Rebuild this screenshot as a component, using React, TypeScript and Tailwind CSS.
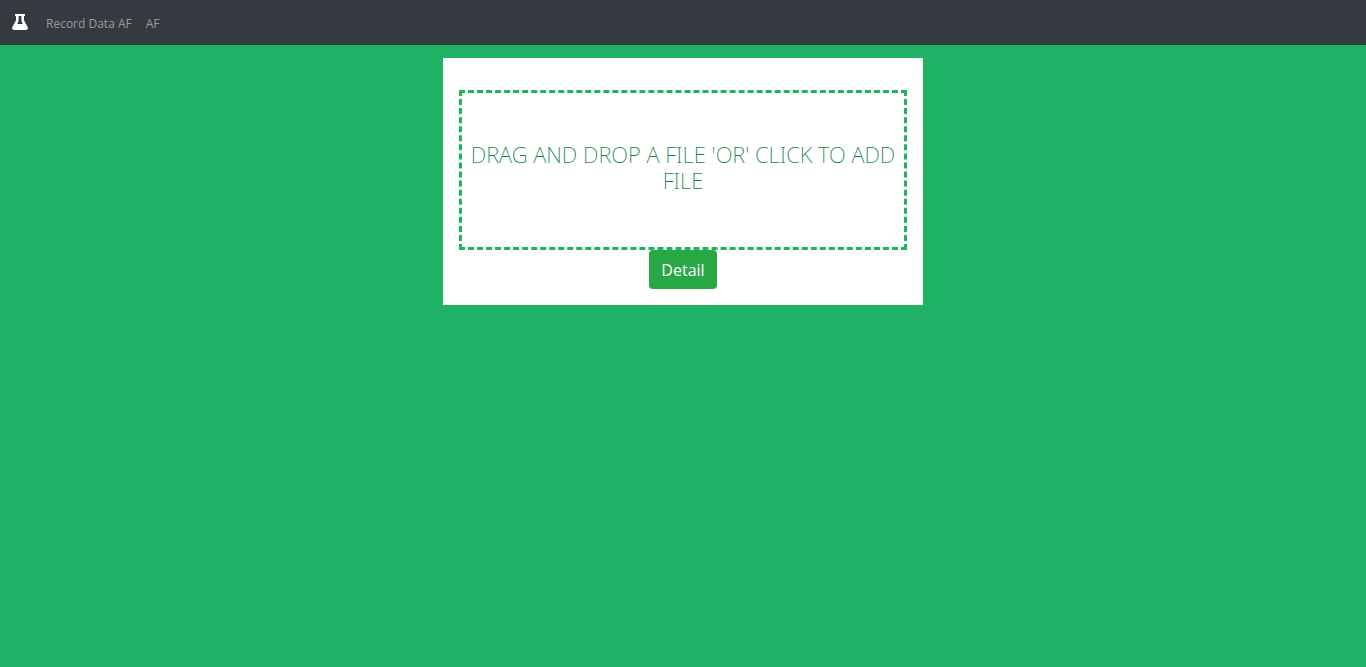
import React from "react";

function FlaskIcon() {
  return (
    <svg viewBox="0 0 16 16" width="16" height="16" fill="currentColor" fillRule="evenodd" aria-hidden="true">
      <path d="M3 0H13V2H12V6.2L15.6 13C16.2 14.5 15.4 16 13.9 16H2.1C.6 16-.2 14.5.4 13L4 6.2V2H3ZM6.6 2V7L5.2 10H10.8L9.4 7V2Z" />
    </svg>
  );
}

function NavBar() {
  return (
    <nav className="flex h-[45px] items-center bg-[#343a40] px-3 text-xs text-[#9a9da0]">
      <a href="#" aria-label="Home" className="mr-[18px] pb-[2px] text-white">
        <FlaskIcon />
      </a>
      <a href="#record" className="mr-[14px] pt-[2px]">Record Data AF</a>
      <a href="#af" className="pt-[2px]">AF</a>
    </nav>
  );
}

function DropZone() {
  return (
    <label className="block cursor-pointer border-[3px] border-dashed border-[#1fb264] pt-12 pb-[54px] text-center font-['Noto_Sans','Open_Sans',sans-serif] text-[22px] leading-[26px] font-extralight text-[#15824b] uppercase">
      <input type="file" className="sr-only" />
      Drag and drop a file 'or' click to add file
    </label>
  );
}

export default function App() {
  return (
    <div className="min-h-screen bg-[#1fb264] font-['Open_Sans','Noto_Sans',sans-serif]">
      <NavBar />
      <main className="mx-auto mt-[13px] max-w-[480px] bg-white px-4 pt-8 pb-4">
        <DropZone />
        <div className="flex justify-center">
          <button type="button" className="h-[39px] rounded bg-[#28a745] px-3 text-base text-white">
            Detail
          </button>
        </div>
      </main>
    </div>
  );
}
